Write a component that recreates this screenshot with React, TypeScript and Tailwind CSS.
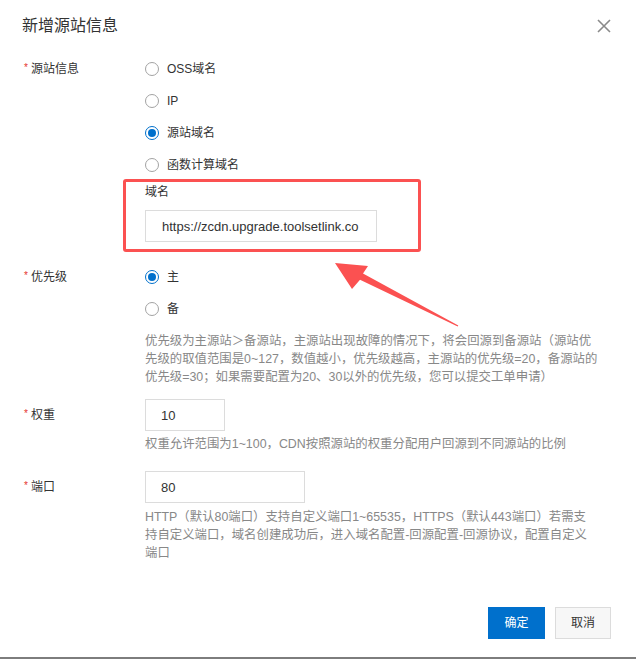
import React from "react";

const sources = ["OSS域名", "IP", "源站域名", "函数计算域名"];
const priorities = ["主", "备"];

function Radio({
  label,
  checked,
  onClick,
}: {
  label: string;
  checked: boolean;
  onClick: () => void;
}) {
  return (
    <div className="flex h-8 cursor-pointer items-center gap-2" onClick={onClick}>
      <span
        className={`flex h-[14px] w-[14px] items-center justify-center rounded-full border bg-white ${
          checked ? "border-[#0070cc]" : "border-[#a3a3a3]"
        }`}
      >
        {checked && <span className="h-2 w-2 rounded-full bg-[#0070cc]" />}
      </span>
      <span>{label}</span>
    </div>
  );
}

function FormItem({
  label,
  className,
  children,
}: {
  label: string;
  className?: string;
  children: React.ReactNode;
}) {
  return (
    <div className={"flex " + (className || "")}>
      <div className="flex h-8 w-[121px] shrink-0 items-center">
        <span className="mr-[3px] -mt-[3px] text-[10px] text-[#e5322d]">*</span>
        <span>{label}</span>
      </div>
      <div className="flex-1">{children}</div>
    </div>
  );
}

function App() {
  const [source, setSource] = React.useState(2);
  const [priority, setPriority] = React.useState(0);
  const [domain, setDomain] = React.useState("https://zcdn.upgrade.toolsetlink.co");
  const [weight, setWeight] = React.useState("10");
  const [port, setPort] = React.useState("80");

  return (
    <div className="relative h-[659px] w-[636px] overflow-hidden bg-white font-['Liberation_Sans','Noto_Sans_CJK_SC',sans-serif] text-[12px] text-[#333]">
      <div className="flex h-[657px] flex-col">
        {/* header */}
        <div className="flex items-center justify-between pl-[22px] pr-[25px] pt-[14px]">
          <h2 className="text-[16px] leading-6 text-[#333]">新增源站信息</h2>
          <svg width="14" height="14" viewBox="0 0 14 14" className="cursor-pointer">
            <path d="M1 1L13 13M13 1L1 13" stroke="#8a8a8a" strokeWidth="1.6" fill="none" />
          </svg>
        </div>

        <div className="mt-[15px] pl-[24px]">
          <FormItem label="源站信息">
            {sources.map((s, i) => (
              <Radio key={s} label={s} checked={source === i} onClick={() => setSource(i)} />
            ))}
            <div className="-ml-[22px] -mt-[2px] h-[73px] w-[298px] rounded-[3px] border-[3px] border-[#fb5151] pl-[19px]">
              <div className="leading-5">域名</div>
              <input
                className="mt-2 h-8 w-[232px] border border-[#dcdcdc] px-4 text-[13px] text-[#333] outline-none"
                value={domain}
                onChange={(e) => setDomain(e.target.value)}
              />
            </div>
          </FormItem>

          <FormItem label="优先级" className="mt-[9px]">
            {priorities.map((p, i) => (
              <Radio key={p} label={p} checked={priority === i} onClick={() => setPriority(i)} />
            ))}
            <div className="mt-[7px] whitespace-nowrap text-[12.4px] leading-[18px] text-[#888]">
              优先级为主源站＞备源站，主源站出现故障的情况下，将会回源到备源站（源站优
              <br />
              先级的取值范围是0~127，数值越小，优先级越高，主源站的优先级=20，备源站的
              <br />
              优先级=30；如果需要配置为20、30以外的优先级，您可以提交工单申请）
            </div>
          </FormItem>

          <FormItem label="权重" className="mt-[13px]">
            <input
              className="h-8 w-[80px] border border-[#dcdcdc] px-[15px] text-[13px] text-[#333] outline-none"
              value={weight}
              onChange={(e) => setWeight(e.target.value)}
            />
            <div className="mt-[4px] whitespace-nowrap text-[12.4px] leading-[18px] text-[#888]">
              权重允许范围为1~100，CDN按照源站的权重分配用户回源到不同源站的比例
            </div>
          </FormItem>

          <FormItem label="端口" className="mt-[18px]">
            <input
              className="h-8 w-[160px] border border-[#dcdcdc] px-[15px] text-[13px] text-[#333] outline-none"
              value={port}
              onChange={(e) => setPort(e.target.value)}
            />
            <div className="mt-[5px] whitespace-nowrap text-[12.4px] leading-[18px] text-[#888]">
              HTTP（默认80端口）支持自定义端口1~65535，HTTPS（默认443端口）若需支
              <br />
              持自定义端口，域名创建成功后，进入域名配置-回源配置-回源协议，配置自定义
              <br />
              端口
            </div>
          </FormItem>
        </div>

        <div className="mt-[45px] flex justify-end gap-[10px] pr-[25px]">
          <button className="h-8 w-[57px] bg-[#0070cc] text-[12px] text-white">确定</button>
          <button className="h-8 w-[56px] border border-[#dcdcdc] bg-[#f7f7f7] text-[12px] text-[#333]">
            取消
          </button>
        </div>
      </div>
      <div className="h-[2px] bg-[#7d7d7d]" />

      {/* annotation arrow */}
      <svg className="pointer-events-none absolute left-0 top-0" width="636" height="659">
        <polygon
          points="335,263 368,266 363,273.6 458.3,325.6 457.7,326.4 360,279.8 352,289"
          fill="#fb5151"
        />
      </svg>
    </div>
  );
}

export default App;
